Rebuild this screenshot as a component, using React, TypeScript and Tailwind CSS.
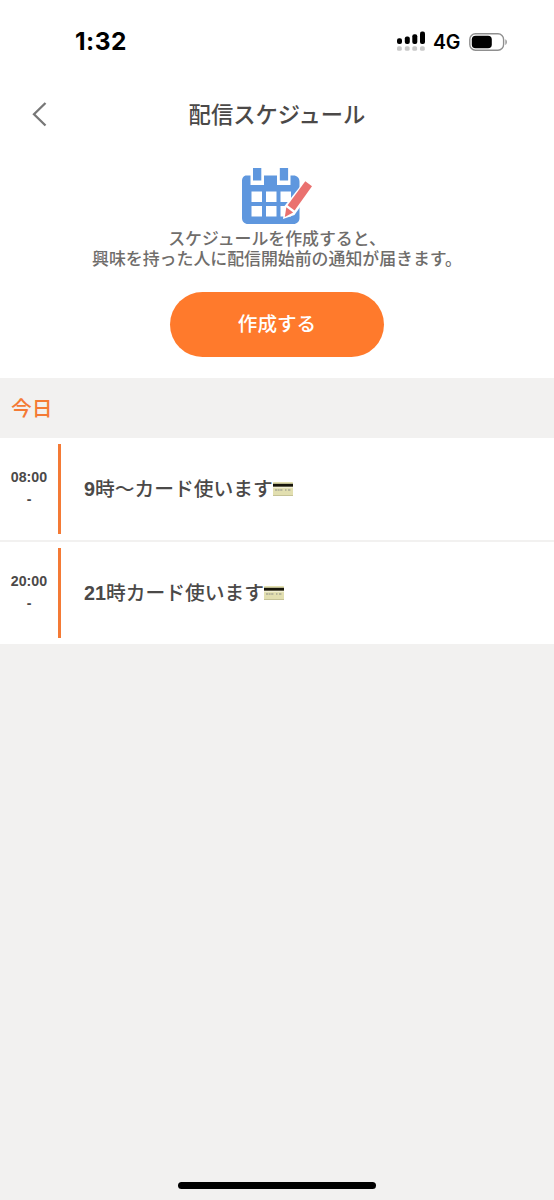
import React from 'react';

type Schedule = {
  id: number;
  time: string;
  hour: string;
  title: string;
};

const schedules: Schedule[] = [
  { id: 1, time: '08:00', hour: '9', title: '時〜カード使います' },
  { id: 2, time: '20:00', hour: '21', title: '時カード使います' },
];

// Status bar
const StatusBar: React.FC = () => (
  <div className="flex h-[83px] items-start justify-between pt-[26px] pr-[45px] pl-[75px]">
    <span className="w-[56px] font-[Inter] text-[24.5px] leading-[30px] font-bold tracking-[0.5px] text-black">1:32</span>
    <div className="mt-px flex h-[30px] items-center">
      <svg width="28" height="20" viewBox="0 0 28 20" className="mt-[-2px]">
        <g fill="#000">
          <rect x="0" y="7.2" width="5" height="5.8" rx="2" />
          <rect x="7.8" y="5.6" width="5" height="7.4" rx="2" />
          <rect x="15.3" y="3.2" width="5" height="9.8" rx="2" />
          <rect x="23" y="0.6" width="5" height="12.4" rx="2" />
        </g>
        <g fill="#c8c8c8">
          <rect x="0" y="15.2" width="4.8" height="4.6" rx="1.6" />
          <rect x="7.8" y="15.2" width="4.8" height="4.6" rx="1.6" />
          <rect x="15.3" y="15.2" width="4.8" height="4.6" rx="1.6" />
          <rect x="23" y="15.2" width="4.8" height="4.6" rx="1.6" />
        </g>
      </svg>
      <span className="ml-[8px] w-[28px] font-[Inter] text-[19.5px] leading-[30px] font-semibold tracking-[-0.3px] text-black">4G</span>
      <svg width="40" height="18" viewBox="0 0 40 18" className="ml-[8px]">
        <rect x="0.8" y="0.8" width="33.8" height="16.4" rx="5.6" fill="none" stroke="#8f8f8f" strokeWidth="1.4" />
        <rect x="2.8" y="2.7" width="20" height="12.6" rx="3.8" fill="#000" />
        <path d="M36.4 6.2c1.9.7 1.9 5 0 5.7z" fill="#8f8f8f" />
      </svg>
    </div>
  </div>
);

const CalendarIcon: React.FC = () => (
  <svg width="74" height="60" viewBox="0 0 74 60">
    <path
      d="M6.5 8.5H10.5v9.5H24V8.5H37v9.5H50.5V8.5H53.5c3.5 0 6 2.5 6 6V51c0 3.5-2.5 6-6 6H8c-3.5 0-6-2.5-6-6V14.5c0-3.5 1.5-6 4.5-6z"
      fill="#5f97de"
    />
    <rect x="13" y="1" width="8.3" height="12.5" fill="#5f97de" />
    <rect x="39.8" y="1" width="8.3" height="12.5" fill="#5f97de" />
    <g fill="#fff">
      <rect x="11.5" y="24.5" width="10.5" height="10.5" />
      <rect x="26" y="24.5" width="10.5" height="10.5" />
      <rect x="40.5" y="24.5" width="10.5" height="10.5" />
      <rect x="11.5" y="39" width="10.5" height="10.5" />
      <rect x="26" y="39" width="10.5" height="10.5" />
      <rect x="40.5" y="39" width="10.5" height="10.5" />
    </g>
    <path d="M66 12L75 18.5L54.5 48L43 52L44.5 39z" fill="#fff" />
    <path d="M65.3 14.2L72 19.3L54.6 43.5L47.6 38.2z" fill="#ea716f" />
    <path d="M46.3 40.2L53.2 45.5L44.8 50z" fill="#ea716f" />
  </svg>
);

const CardIcon: React.FC = () => (
  <svg width="20" height="14" viewBox="0 0 20 14" className="mb-px">
    <rect width="20" height="14" rx="0.8" fill="#e2dfb0" />
    <rect y="1.8" width="20" height="3" fill="#17150b" />
    <path d="M0 4.8h20v1.3H0z" fill="#f1efd4" />
    <path d="M2 8h8M12 8h1.5M15 8h3" stroke="#a9a995" strokeWidth="1.3" strokeDasharray="2 .6" />
    <path d="M0 13.5h20" stroke="#c6c396" strokeWidth="1" />
  </svg>
);

const ScheduleRow: React.FC<{ schedule: Schedule }> = ({ schedule }) => (
  <li className="flex h-[102px] items-center bg-white">
    <div className="flex w-[58px] flex-col items-center pb-[3px] text-[14.2px] font-bold text-[#4b4948]">
      <span className="leading-[23px]">{schedule.time}</span>
      <span className="leading-[21px]">-</span>
    </div>
    <div className="h-[90px] w-[3px] bg-[#f47a35]" />
    <div className="ml-[23px] flex items-center">
      <p className="text-[19.75px] leading-[28px] font-medium text-[#4b4948]">
        <span className="font-bold">{schedule.hour}</span>
        {schedule.title}
      </p>
      <CardIcon />
    </div>
  </li>
);

const App: React.FC = () => {
  return (
    <div className="flex min-h-[1200px] w-[554px] flex-col bg-[#f2f1f0] font-['Liberation_Sans','Noto_Sans_CJK_JP',sans-serif]">
      <section className="h-[378px] bg-white">
        <StatusBar />

        {/* Header */}
        <header className="grid h-[62px] grid-cols-[80px_1fr_80px] items-center">
          <svg width="18" height="26" viewBox="0 0 18 26" className="ml-[31px]" fill="none" stroke="#777" strokeWidth="2.3">
            <path d="M14.5 2L3 13.2L14.5 24.5" />
          </svg>
          <h1 className="pt-[4px] text-center text-[22.3px] leading-[32px] font-medium text-[#4b4948]">配信スケジュール</h1>
        </header>

        <div className="flex flex-col items-center pt-[22px]">
          <CalendarIcon />
          <p className="mt-[3px] text-center text-[16.9px] leading-[19.5px] font-medium text-[#6f6d6b]">
            スケジュールを作成すると、
            <br />
            興味を持った人に配信開始前の通知が届きます。
          </p>
          <button className="mt-[23px] h-[64.5px] w-[214px] rounded-full bg-[#ff7a2c] text-[19.6px] font-medium text-white">
            作成する
          </button>
        </div>
      </section>

      {/* Schedule list */}
      <h2 className="flex h-[60px] items-center pt-[2px] pl-[11px] text-[20.8px] font-medium text-[#f47a35]">今日</h2>
      <ul className="flex flex-col gap-[2px]">
        {schedules.map((schedule) => (
          <ScheduleRow key={schedule.id} schedule={schedule} />
        ))}
      </ul>

      {/* Home indicator */}
      <div className="mt-auto mb-[11px] h-[7px] w-[198px] self-center rounded-full bg-black" />
    </div>
  );
};

export default App;
